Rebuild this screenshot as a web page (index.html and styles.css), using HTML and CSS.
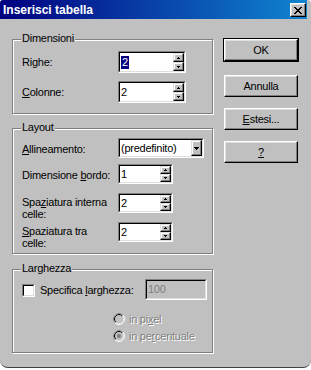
FILE: index.html
```html
<!DOCTYPE html>
<html lang="it">

<head>
    <meta charset="UTF-8">
    <meta name="viewport" content="width=device-width, initial-scale=1.0">
    <title>Inserisci tabella</title>
    <link rel="stylesheet" href="styles.css">
</head>

<body>
    <div class="window">
        <div class="titlebar">
            <span class="title">Inserisci tabella</span>
            <div class="close">
                <svg width="8" height="7" viewBox="0 0 8 7">
                    <path d="M0 0h2v1H0z M6 0h2v1H6z M1 1h2v1H1z M5 1h2v1H5z M2 2h4v1H2z M3 3h2v1H3z M2 4h4v1H2z M1 5h2v1H1z M5 5h2v1H5z M0 6h2v1H0z M6 6h2v1H6z" fill="#000"/>
                </svg>
            </div>
        </div>

        <div class="content">
            <div class="left">
                <div class="group dimensioni">
                    <span class="legend">Dimensioni</span>
                    <div class="row">
                        <span class="label">Ri<u>g</u>he:</span>
                        <div class="edit wide">
                            <div class="inner">
                                <span class="value"><span class="sel">2</span></span>
                                <div class="spinner">
                                    <div class="spin"><svg width="3" height="2"><path d="M1 0h1v1h1v1H0V1h1z"/></svg></div>
                                    <div class="spin"><svg width="3" height="2"><path d="M0 0h3v1H2v1H1V1H0z"/></svg></div>
                                </div>
                            </div>
                        </div>
                    </div>
                    <div class="row second">
                        <span class="label"><u>C</u>olonne:</span>
                        <div class="edit wide">
                            <div class="inner">
                                <span class="value">2</span>
                                <div class="spinner">
                                    <div class="spin"><svg width="3" height="2"><path d="M1 0h1v1h1v1H0V1h1z"/></svg></div>
                                    <div class="spin"><svg width="3" height="2"><path d="M0 0h3v1H2v1H1V1H0z"/></svg></div>
                                </div>
                            </div>
                        </div>
                    </div>
                </div>

                <div class="group layout">
                    <span class="legend">Layout</span>
                    <div class="row">
                        <span class="label"><u>A</u>llineamento:</span>
                        <div class="edit select">
                            <div class="inner">
                                <span class="value">(predefinito)</span>
                                <div class="drop"><svg width="5" height="3"><path d="M0 0h5v1H4v1H3v1H2V2H1V1H0z"/></svg></div>
                            </div>
                        </div>
                    </div>
                    <div class="row r2">
                        <span class="label">Dimensione <u>b</u>ordo:</span>
                        <div class="edit narrow">
                            <div class="inner">
                                <span class="value">1</span>
                                <div class="spinner">
                                    <div class="spin"><svg width="3" height="2"><path d="M1 0h1v1h1v1H0V1h1z"/></svg></div>
                                    <div class="spin"><svg width="3" height="2"><path d="M0 0h3v1H2v1H1V1H0z"/></svg></div>
                                </div>
                            </div>
                        </div>
                    </div>
                    <div class="row r3">
                        <span class="label two">Spa<u>z</u>iatura interna<br>celle:</span>
                        <div class="edit narrow">
                            <div class="inner">
                                <span class="value">2</span>
                                <div class="spinner">
                                    <div class="spin"><svg width="3" height="2"><path d="M1 0h1v1h1v1H0V1h1z"/></svg></div>
                                    <div class="spin"><svg width="3" height="2"><path d="M0 0h3v1H2v1H1V1H0z"/></svg></div>
                                </div>
                            </div>
                        </div>
                    </div>
                    <div class="row r3">
                        <span class="label two"><u>S</u>paziatura tra<br>celle:</span>
                        <div class="edit narrow">
                            <div class="inner">
                                <span class="value">2</span>
                                <div class="spinner">
                                    <div class="spin"><svg width="3" height="2"><path d="M1 0h1v1h1v1H0V1h1z"/></svg></div>
                                    <div class="spin"><svg width="3" height="2"><path d="M0 0h3v1H2v1H1V1H0z"/></svg></div>
                                </div>
                            </div>
                        </div>
                    </div>
                </div>

                <div class="group larghezza">
                    <span class="legend">Larghezza</span>
                    <div class="checkrow">
                        <div class="check"><div class="box"></div></div>
                        <span class="checklabel">Specifica <u>l</u>arghezza:</span>
                        <div class="edit disabled">
                            <div class="inner">
                                <span class="value">100</span>
                            </div>
                        </div>
                    </div>
                    <div class="radios">
                        <div class="radio">
                            <svg width="12" height="12" viewBox="0 0 12 12">
                                <circle cx="6" cy="6" r="5.5" fill="#c0c0c0" stroke="#fff"/>
                                <path d="M2.1 9.9A5.5 5.5 0 0 1 9.9 2.1" fill="none" stroke="#808080"/>
                                <circle cx="6" cy="6" r="4.5" fill="none" stroke="#dfdfdf"/>
                                <path d="M2.8 9.2A4.5 4.5 0 0 1 9.2 2.8" fill="none" stroke="#000"/>
                            </svg>
                            <span class="dim">in pi<u>x</u>el</span>
                        </div>
                        <div class="radio">
                            <svg width="12" height="12" viewBox="0 0 12 12">
                                <circle cx="6" cy="6" r="5.5" fill="#c0c0c0" stroke="#fff"/>
                                <path d="M2.1 9.9A5.5 5.5 0 0 1 9.9 2.1" fill="none" stroke="#808080"/>
                                <circle cx="6" cy="6" r="4.5" fill="none" stroke="#dfdfdf"/>
                                <path d="M2.8 9.2A4.5 4.5 0 0 1 9.2 2.8" fill="none" stroke="#000"/>
                                <circle cx="6" cy="6" r="2" fill="#808080"/>
                            </svg>
                            <span class="dim">in pe<u>r</u>centuale</span>
                        </div>
                    </div>
                </div>
            </div>

            <div class="buttons">
                <div class="btn default">OK</div>
                <div class="btn">Annulla</div>
                <div class="btn"><span><u>E</u>stesi...</span></div>
                <div class="btn"><u>?</u></div>
            </div>
        </div>
    </div>
</body>

</html>
```

FILE: styles.css
```css
* {
    box-sizing: border-box;
}

body {
    margin: 0;
    background: #fff;
    font-family: "Liberation Sans", Arial, sans-serif;
    font-size: 11px;
    letter-spacing: -0.25px;
    color: #000;
}

.window {
    width: 311px;
    height: 368px;
    background: #c0c0c0;
    border-bottom: 1px solid #404040;
    border-radius: 3px 3px 8px 8px;
    overflow: hidden;
}

/* title bar */

.titlebar {
    height: 19px;
    margin-right: 4px;
    padding: 0 1px 0 3px;

    display: flex;
    align-items: center;
    justify-content: space-between;

    background: linear-gradient(to right, #000080, #1084d0);
}

.titlebar .title {
    color: #fff;
    font-size: 12px;
    font-weight: bold;
    letter-spacing: 0;
    line-height: 19px;
    padding-top: 2px;
}

.titlebar .close {
    width: 16px;
    height: 14px;
    margin-top: 1px;

    display: flex;
    align-items: center;
    justify-content: center;

    background: #c0c0c0;
    border: 1px solid;
    border-color: #fff #000 #000 #fff;
    box-shadow: inset -1px -1px #808080, inset 1px 1px #dfdfdf;
}

/* main area */

.content {
    display: flex;
    padding-left: 12px;
}

.left {
    width: 201px;
    padding-top: 20px;
}

.group {
    position: relative;
    border: 1px solid #808080;
    box-shadow: inset 1px 1px #fff, 1px 1px #fff;
    padding-left: 9px;
}

.group .legend {
    position: absolute;
    top: -8px;
    left: 8px;
    padding: 0 1px;
    line-height: 13px;
    background: #c0c0c0;
}

.dimensioni {
    height: 75px;
    padding-top: 11px;
}

.layout {
    height: 126px;
    margin-top: 14px;
    padding-top: 9px;
}

.larghezza {
    height: 84px;
    margin-top: 15px;
    padding-top: 9px;
}

.row {
    display: flex;
    align-items: center;
}

.row .label {
    width: 96px;
    line-height: 13px;
}

.dimensioni .row {
    height: 22px;
}

.dimensioni .second {
    margin-top: 8px;
}

.layout .row {
    height: 20px;
    align-items: flex-start;
}

.layout .row .label {
    margin-top: 5px;
}

.layout .r2 {
    margin-top: 6px;
}

.layout .r3 {
    margin-top: 9px;
}

.layout .row .label.two {
    margin-top: 3px;
    line-height: 12px;
}

/* edit boxes */

.edit {
    height: 100%;
    border: 1px solid;
    border-color: #808080 #fff #fff #808080;
}

.edit .inner {
    height: 100%;
    display: flex;
    align-items: center;
    background: #fff;
    border: 1px solid;
    border-color: #000 #dfdfdf #dfdfdf #000;
}

.edit .value {
    flex: 1;
    padding-left: 1px;
    line-height: 13px;
}

.edit .sel {
    display: inline-block;
    padding: 0 1px;
    background: #000080;
    color: #fff;
}

.edit.wide {
    width: 68px;
}

.edit.narrow {
    width: 55px;
}

.edit.select {
    width: 86px;
}

.spinner {
    width: 11px;
    height: 100%;
    display: flex;
    flex-direction: column;
}

.spin,
.drop {
    flex: 1;
    display: flex;
    align-items: center;
    justify-content: center;

    background: #c0c0c0;
    border: 1px solid;
    border-color: #dfdfdf #000 #000 #dfdfdf;
    box-shadow: inset -1px -1px #808080, inset 1px 1px #fff;
}

.drop {
    flex: none;
    width: 11px;
    height: 100%;
}

.edit.disabled {
    width: 62px;
    height: 21px;
    margin-left: auto;
    margin-right: 5px;
}

.edit.disabled .inner {
    background: #c0c0c0;
    color: #808080;
}

/* check box and radios */

.checkrow {
    display: flex;
    align-items: center;
    height: 21px;
}

.check {
    width: 13px;
    height: 13px;
    margin-top: 1px;
    border: 1px solid;
    border-color: #808080 #fff #fff #808080;
}

.check .box {
    height: 100%;
    background: #fff;
    border: 1px solid;
    border-color: #000 #dfdfdf #dfdfdf #000;
}

.checklabel {
    margin-left: 5px;
}

.radios {
    margin-top: 13px;
    margin-left: 91px;
    display: flex;
    flex-direction: column;
    gap: 5px;
}

.radio {
    height: 12px;
    display: flex;
    align-items: center;
    gap: 4px;
}

.dim {
    color: #808080;
    text-shadow: 1px 1px #fff;
}

/* buttons */

.buttons {
    margin-left: 11px;
    padding-top: 20px;
    display: flex;
    flex-direction: column;
}

.btn {
    width: 74px;
    height: 22px;
    margin-top: 11px;

    display: flex;
    align-items: center;
    justify-content: center;

    background: #c0c0c0;
    border: 1px solid;
    border-color: #fff #000 #000 #fff;
    box-shadow: inset -1px -1px #808080, inset 1px 1px #dfdfdf;
}

.btn.default {
    margin-top: 0;
    margin-bottom: 3px;
    outline: 1px solid #000;
}
```
